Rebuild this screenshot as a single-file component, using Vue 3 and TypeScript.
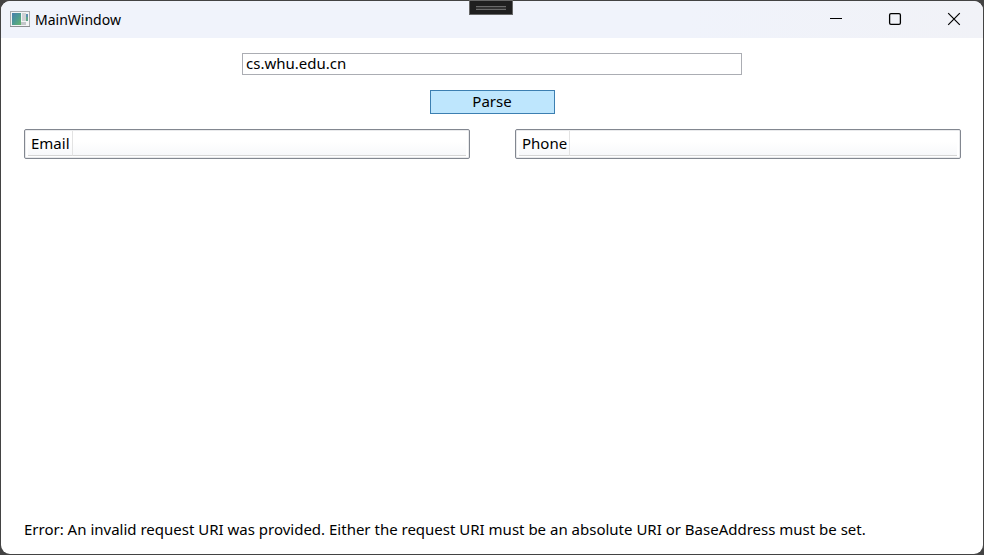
<script setup lang="ts">
import { ref } from 'vue'

const url = ref<string>('cs.whu.edu.cn')
const message = ref<string>(
  'Error: An invalid request URI was provided. Either the request URI must be an absolute URI or BaseAddress must be set.'
)
const lists: string[] = ['Email', 'Phone']
</script>

<template>
  <div class="desktop">
    <div class="window">
      <header class="titlebar">
        <svg class="app-icon" width="20" height="17" viewBox="0 0 20 17" aria-hidden="true">
          <defs>
            <linearGradient id="pane" x1="0" y1="0" x2="1" y2="1">
              <stop offset="0" stop-color="#4a7fae" />
              <stop offset="0.5" stop-color="#4c9a92" />
              <stop offset="1" stop-color="#67b56c" />
            </linearGradient>
          </defs>
          <rect x="0.5" y="0.5" width="19" height="15" fill="#f3f4f5" stroke="#a9abae" />
          <path d="M0 15.5H20" stroke="#8c8e92" />
          <rect x="2" y="2" width="9" height="12" fill="url(#pane)" />
          <rect x="12" y="2" width="4" height="8" fill="#cfd1d4" />
          <rect x="11" y="11" width="5" height="3" fill="#c3c6c9" />
          <rect x="16" y="3" width="2" height="3" fill="#5a8fae" />
          <rect x="16" y="6" width="2" height="4" fill="#62a78a" />
        </svg>
        <h1 class="title">MainWindow</h1>
        <div class="controls">
          <button type="button" aria-label="Minimize">
            <svg width="14" height="14" viewBox="0 0 14 14"><path d="M1 6.5H13" stroke="#000" /></svg>
          </button>
          <button type="button" aria-label="Maximize">
            <svg width="14" height="14" viewBox="0 0 14 14">
              <rect x="1.6" y="1.6" width="10.8" height="10.8" rx="1.4" fill="none" stroke="#000" stroke-width="1.3" />
            </svg>
          </button>
          <button type="button" aria-label="Close">
            <svg width="14" height="14" viewBox="0 0 14 14">
              <path d="M1.2 1.2L12.8 12.8M12.8 1.2L1.2 12.8" stroke="#000" stroke-width="1.2" />
            </svg>
          </button>
        </div>
        <div class="debug-tab"><span class="grip"></span></div>
      </header>

      <main class="content">
        <input v-model="url" class="url" type="text" aria-label="URL" spellcheck="false" />
        <button type="button" class="parse">Parse</button>
        <div class="lists">
          <div v-for="name in lists" :key="name" class="list">
            <table>
              <thead>
                <tr>
                  <th scope="col">{{ name }}</th>
                  <td></td>
                </tr>
              </thead>
            </table>
          </div>
        </div>
        <p class="status" role="status">{{ message }}</p>
      </main>
    </div>
  </div>
</template>

<style>
body {
  background: #2b2b2b;
}
</style>

<style scoped>
.desktop {
  box-sizing: border-box;
  min-height: 100vh;
  display: flex;
  padding: 1px;
  background: #434343;
  font-family: 'Noto Sans', 'Open Sans', sans-serif;
  font-size: 15px;
  line-height: 20px;
  color: #000;
}

.window {
  flex: 1;
  display: flex;
  flex-direction: column;
  border-radius: 9px;
  background: #fff;
  overflow: hidden;
}

.titlebar {
  display: flex;
  align-items: center;
  height: 37px;
  padding-left: 9px;
  gap: 5px;
  background: linear-gradient(90deg, #f0f3fb 70%, #f1f2f7);
}

.app-icon {
  display: block;
}

.title {
  flex: 1;
  margin: 0;
  font-size: 14px;
  font-weight: 400;
}

.controls {
  display: flex;
  align-self: stretch;
}

.controls button {
  display: flex;
  align-items: center;
  justify-content: center;
  width: 59px;
  padding: 0 0 2px;
  border: 0;
  background: none;
}

.debug-tab {
  position: absolute;
  top: 0;
  left: 50%;
  box-sizing: border-box;
  width: 44px;
  height: 15px;
  margin-left: -23px;
  padding: 5px 6px;
  border: 1px solid #666;
  background: #1f1f1f;
}

.grip {
  display: block;
  box-sizing: border-box;
  height: 4px;
  border: solid #6a6a6a;
  border-width: 1px 0;
  background: #333;
}

.content {
  flex: 1;
  display: flex;
  flex-direction: column;
  align-items: center;
  gap: 15px;
  padding: 15px 22px;
}

.url {
  box-sizing: border-box;
  width: 500px;
  max-width: 100%;
  height: 22px;
  padding: 0 3px 2px;
  border: 1px solid #abadb3;
  font: inherit;
  color: inherit;
  outline: none;
}

.parse {
  box-sizing: border-box;
  width: 125px;
  height: 24px;
  padding: 0 0 2px;
  border: 1px solid #3c7fb1;
  background: #bee6fd;
  font: inherit;
  color: inherit;
}

.lists {
  align-self: stretch;
  flex: 1;
  display: grid;
  grid-template-columns: 1fr 1fr;
  align-items: start;
  column-gap: 45px;
  padding-left: 1px;
}

.list {
  padding: 1px 3px 2px;
  border: 1px solid #828790;
  border-radius: 2px;
  box-shadow: inset 0 0 0 1px #e9eaec;
}

table {
  width: 100%;
  border-collapse: separate;
  border-spacing: 0;
  background: linear-gradient(#fff 40%, #f7f8fa);
}

th,
td {
  height: 24px;
  padding: 0;
  border-bottom: 1px solid #d5d5d5;
}

th {
  width: 1px;
  padding: 0 2px 0 3px;
  border-right: 1px solid #e3e3e3;
  font-weight: 400;
  text-align: left;
}

.status {
  align-self: stretch;
  margin: 0;
  padding-left: 1px;
}
</style>
